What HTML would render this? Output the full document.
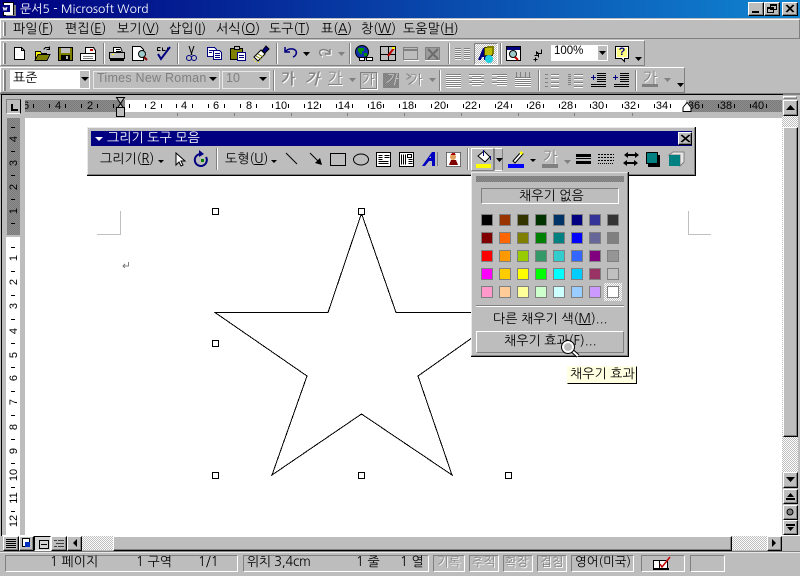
<!DOCTYPE html>
<html><head><meta charset="utf-8"><title>문서5 - Microsoft Word</title>
<style>
html,body{margin:0;padding:0;background:#bdbdbd}
#w{position:relative;width:800px;height:576px;overflow:hidden;background:#bdbdbd;font:13px "NanumGothic","Noto Sans CJK KR",sans-serif;color:#000}
#w div{position:absolute;box-sizing:border-box}
.t{white-space:nowrap;line-height:14px;height:14px}
.d{color:#848484;text-shadow:1px 1px 0 #fff}
.r{font:11px "Liberation Sans",sans-serif;line-height:12px;height:12px;text-align:center;width:20px;white-space:nowrap}
.v{font:11px "Liberation Sans",sans-serif;line-height:12px;height:12px;text-align:center;width:20px;white-space:nowrap;transform:rotate(-90deg)}
.bv{background:#bdbdbd;border:1px solid;border-color:#fff #000 #000 #fff;box-shadow:inset -1px -1px 0 #808080}
.tb{background:#bdbdbd;border:1px solid;border-color:#fff #808080 #808080 #fff}
.p{border:1px solid;border-color:#808080 #fff #fff #808080}
.dt{background:repeating-conic-gradient(#fff 0 25%,#bdbdbd 0 50%) 0 0/2px 2px}
.dk{background:repeating-conic-gradient(#7b7b7b 0 25%,#8c8c8c 0 50%) 0 0/2px 2px}
svg{position:absolute;left:0;top:0}
</style></head><body><div id="w">

<!-- title bar -->
<div style="left:0;top:0;width:800px;height:18px;background:linear-gradient(90deg,#000080,#1084d0)"></div>
<div class="t" style="left:20px;top:1px;color:#fff;font-size:12px;line-height:16px;height:16px">문서5 - Microsoft Word</div>
<div class="bv" style="left:748px;top:2px;width:16px;height:14px"></div>
<div class="bv" style="left:764px;top:2px;width:16px;height:14px"></div>
<div class="bv" style="left:782px;top:2px;width:16px;height:14px"></div>

<!-- menu bar -->
<div class="tb" style="left:0;top:19px;width:800px;height:20px"></div>
<div class="t" style="left:13px;top:22px">파일(<u>F</u>)</div>
<div class="t" style="left:65px;top:22px">편집(<u>E</u>)</div>
<div class="t" style="left:117px;top:22px">보기(<u>V</u>)</div>
<div class="t" style="left:169px;top:22px">삽입(<u>I</u>)</div>
<div class="t" style="left:216px;top:22px">서식(<u>O</u>)</div>
<div class="t" style="left:269px;top:22px">도구(<u>T</u>)</div>
<div class="t" style="left:321px;top:22px">표(<u>A</u>)</div>
<div class="t" style="left:361px;top:22px">창(<u>W</u>)</div>
<div class="t" style="left:403px;top:22px">도움말(<u>H</u>)</div>

<!-- toolbars -->
<div class="tb" style="left:0;top:40px;width:645px;height:26px"></div>
<div class="tb" style="left:0;top:67px;width:685px;height:26px"></div>
<div style="left:474px;top:43px;width:24px;height:22px;border:1px solid;border-color:#808080 #fff #fff #808080" class="dt"></div>
<div style="left:10px;top:70px;width:80px;height:19px;background:#fff"></div>
<div style="left:80px;top:71px;width:9px;height:17px;background:#bdbdbd"></div>
<div class="t" style="left:13px;top:71px">표준</div>
<div style="left:93px;top:71px;width:127px;height:18px;border:1px solid #e8e8e8"></div>
<div class="t d" style="left:97px;top:71px;font:12.5px/14px 'Liberation Sans',sans-serif;text-shadow:none;color:#808080;letter-spacing:.25px">Times New Roman</div>
<div style="left:222px;top:71px;width:48px;height:18px;border:1px solid #e8e8e8"></div>
<div class="t" style="left:226px;top:71px;font:12.5px/14px 'Liberation Sans',sans-serif;color:#808080">10</div>
<div class="t d" style="left:281px;top:73px;font-weight:bold;font-size:15px">가</div>
<div class="t d" style="left:305px;top:73px;font-style:italic;font-weight:bold;font-size:15px">가</div>
<div class="t d" style="left:328px;top:72px;font-size:15px"><u>가</u></div>
<div style="left:360px;top:72px;width:17px;height:17px;border:1px solid #808080;box-shadow:1px 1px 0 #fff"></div>
<div class="t d" style="left:362px;top:73px">가</div>
<div class="dk" style="left:383px;top:73px;width:16px;height:15px"></div>
<div class="t" style="left:385px;top:73px;color:#ccc;font-style:italic">가</div>
<div class="t d" style="left:410px;top:73px">가</div>
<div class="t d" style="left:643px;top:72px;font-size:15px">가</div>
<div style="left:551px;top:45px;width:57px;height:16px;background:#fff"></div>
<div style="left:598px;top:46px;width:9px;height:14px;background:#bdbdbd"></div>
<div class="t" style="left:554px;top:44px;font:11.5px/15px 'Liberation Sans',sans-serif">100%</div>

<!-- ruler zone -->
<div style="left:0;top:93px;width:800px;height:2px;background:#808080"></div>
<div style="left:1px;top:94px;width:782px;height:1px;background:#000"></div>
<div style="left:1px;top:94px;width:1px;height:442px;background:#000"></div>
<div style="left:25px;top:100px;width:100px;height:12px" class="dk"></div>
<div style="left:125px;top:100px;width:561px;height:12px;background:#fff"></div>
<div style="left:689px;top:100px;width:93px;height:12px" class="dk"></div>
<div class="p" style="left:6px;top:99px;width:15px;height:15px;border-color:#808080 #000 #fff #808080"></div>
<div style="left:25px;top:118px;width:758px;height:418px;background:#fff"></div>
<div class="dk" style="left:7px;top:118px;width:13px;height:117px"></div>
<div style="left:6px;top:237px;width:14px;height:298px;background:#fff"></div>

<!-- horizontal ruler numbers -->
<div class="r" style="left:16px;top:100px;clip-path:inset(0 0 0 9px)">6</div>
<div class="r" style="left:48px;top:100px">4</div>
<div class="r" style="left:80px;top:100px">2</div>
<div class="r" style="left:143px;top:100px">2</div>
<div class="r" style="left:174px;top:100px">4</div>
<div class="r" style="left:206px;top:100px">6</div>
<div class="r" style="left:239px;top:100px">8</div>
<div class="r" style="left:271px;top:100px">10</div>
<div class="r" style="left:303px;top:100px">12</div>
<div class="r" style="left:334px;top:100px">14</div>
<div class="r" style="left:366px;top:100px">16</div>
<div class="r" style="left:398px;top:100px">18</div>
<div class="r" style="left:430px;top:100px">20</div>
<div class="r" style="left:461px;top:100px">22</div>
<div class="r" style="left:493px;top:100px">24</div>
<div class="r" style="left:525px;top:100px">26</div>
<div class="r" style="left:557px;top:100px">28</div>
<div class="r" style="left:588px;top:100px">30</div>
<div class="r" style="left:620px;top:100px">32</div>
<div class="r" style="left:652px;top:100px">34</div>
<div class="r" style="left:684px;top:100px">36</div>
<div class="r" style="left:716px;top:100px">38</div>
<div class="r" style="left:748px;top:100px">40</div>

<!-- vertical ruler numbers -->
<div class="v" style="left:4px;top:133px">4</div>
<div class="v" style="left:4px;top:157px">3</div>
<div class="v" style="left:4px;top:181px">2</div>
<div class="v" style="left:4px;top:205px">1</div>
<div class="v" style="left:4px;top:252px">1</div>
<div class="v" style="left:4px;top:276px">2</div>
<div class="v" style="left:4px;top:300px">3</div>
<div class="v" style="left:4px;top:325px">4</div>
<div class="v" style="left:4px;top:349px">5</div>
<div class="v" style="left:4px;top:372px">6</div>
<div class="v" style="left:4px;top:396px">7</div>
<div class="v" style="left:4px;top:421px">8</div>
<div class="v" style="left:4px;top:445px">9</div>
<div class="v" style="left:4px;top:469px">10</div>
<div class="v" style="left:4px;top:492px">11</div>
<div class="v" style="left:4px;top:515px">12</div>

<!-- document art -->
<svg width="800" height="576">
<path shape-rendering="crispEdges" fill="none" stroke="#000" d="M361.500 213.500L396 312.500H508L418 376L452 475L361.500 414L272 475L307 376L215 312.500H328Z"/>
<g shape-rendering="crispEdges" fill="none" stroke="#c0c0c0">
<path d="M120.500 211V234.500H97M688.500 211V234.500H711"/>
</g>
<g shape-rendering="crispEdges" fill="#fff" stroke="#000">
<rect x="212.500" y="208.500" width="6" height="6"/><rect x="358.500" y="208.500" width="6" height="6"/>
<rect x="212.500" y="340.500" width="6" height="6"/>
<rect x="212.500" y="472.500" width="6" height="6"/><rect x="358.500" y="472.500" width="6" height="6"/><rect x="505.500" y="472.500" width="6" height="6"/>
</g>
<path d="M128.500 262v4h-5M125 264l-2 2 2 2" fill="none" stroke="#808080" shape-rendering="crispEdges"/>
<!-- ruler ticks -->
<path shape-rendering="crispEdges" fill="none" stroke="#000" d="M33.500 104v4M49.500 104v4M65.500 104v4M81.500 104v4M97.500 104v4M113.500 104v4M129.500 104v4M145.500 104v4M161.500 104v4M176.500 104v4M192.500 104v4M208.500 104v4M224.500 104v4M240.500 104v4M256.500 104v4M272.500 104v4M288.500 104v4M304.500 104v4M320.500 104v4M336.500 104v4M352.500 104v4M368.500 104v4M383.500 104v4M399.500 104v4M415.500 104v4M431.500 104v4M447.500 104v4M463.500 104v4M479.500 104v4M495.500 104v4M511.500 104v4M527.500 104v4M543.500 104v4M559.500 104v4M575.500 104v4M590.500 104v4M606.500 104v4M622.500 104v4M638.500 104v4M654.500 104v4M670.500 104v4M702.500 104v4M718.500 104v4M734.500 104v4M750.500 104v4M766.500 104v4
M11 127.500h4M11 151.500h4M11 175.500h4M11 199.500h4M11 223.500h4M11 247.500h4M11 271.500h4M11 295.500h4M11 319.500h4M11 343.500h4M11 367.500h4M11 391.500h4M11 415.500h4M11 439.500h4M11 463.500h4M11 487.500h4M11 511.500h4"/>
<path shape-rendering="crispEdges" fill="none" stroke="#808080" d="M177.500 113v3M234.500 113v3M291.500 113v3M347.500 113v3M404.500 113v3M461.500 113v3M518.500 113v3M574.500 113v3M632.500 113v3"/>
<path shape-rendering="crispEdges" fill="#000" d="M11 104h2v5h5v2h-7z"/>
<!-- ruler indents -->
<path fill="#bdbdbd" stroke="#000" d="M116.500 97.500h8l-4 6 4 6h-8l4-6z"/>
<rect x="116.500" y="107.500" width="8" height="9" fill="#bdbdbd" stroke="#000" shape-rendering="crispEdges"/>
<path fill="#fff" stroke="#000" d="M683 111.500v-4l4-5 4 5v4z"/>
</svg>

<!-- floating drawing toolbar -->
<div style="left:87px;top:127px;width:609px;height:49px;background:#000"></div>
<div style="left:87px;top:127px;width:608px;height:48px;background:#bdbdbd;border:1px solid;border-color:#e8e8e8 #808080 #808080 #e8e8e8;box-shadow:inset 1px 1px 0 #bdbdbd"></div>
<div style="left:91px;top:131px;width:601px;height:15px;background:#000080"></div>
<div class="t" style="left:107px;top:131px;color:#fff">그리기 도구 모음</div>
<div class="bv" style="left:678px;top:132px;width:14px;height:13px"></div>
<div class="t" style="left:100px;top:152px">그리기(<u>R</u>)</div>
<div class="t" style="left:225px;top:152px">도형(<u>U</u>)</div>
<div class="t d" style="left:543px;top:151px;font-size:15px">가</div>
<div style="left:471px;top:148px;width:23px;height:23px;border:1px solid;border-color:#fff #808080 #808080 #fff"></div>
<div style="left:494px;top:148px;width:9px;height:23px;border:1px solid;border-color:#fff #808080 #fff #808080"></div>

<!-- fill menu -->
<div style="left:471px;top:172px;width:158px;height:185px;background:#000"></div>
<div style="left:471px;top:172px;width:157px;height:184px;background:#bdbdbd;border:1px solid;border-color:#e8e8e8 #808080 #808080 #e8e8e8"></div>
<div class="dk" style="left:476px;top:176px;width:148px;height:6px"></div>
<div style="left:481px;top:188px;width:138px;height:16px;border:1px solid;border-color:#808080 #fff #fff #808080"></div>
<div class="t" style="left:519px;top:189px">채우기 없음</div>
<div style="left:476px;top:305px;width:148px;height:1px;background:#808080"></div>
<div style="left:476px;top:306px;width:148px;height:1px;background:#fff"></div>
<div class="t" style="left:493px;top:312px">다른 채우기 색(<u>M</u>)...</div>
<div style="left:476px;top:331px;width:148px;height:22px;border:1px solid;border-color:#fff #808080 #808080 #fff"></div>
<div class="t" style="left:504px;top:334px">채우기 효과(F)...</div>
<div class="dt" style="left:604px;top:283px;width:18px;height:18px"></div>

<!-- tooltip -->
<div style="left:567px;top:366px;width:70px;height:18px;background:#ffffe1;border:1px solid;border-color:#ffffe1 #000 #000 #ffffe1"></div>
<div class="t" style="left:570px;top:367px">채우기 효과</div>

<!-- scrollbars -->
<div style="left:782px;top:95px;width:18px;height:441px;background:#bdbdbd"></div>
<div class="tb" style="left:783px;top:96px;width:14px;height:3px"></div>
<div class="dt" style="left:782px;top:116px;width:16px;height:357px"></div>
<div class="bv" style="left:783px;top:127px;width:15px;height:310px"></div>
<div class="bv" style="left:783px;top:100px;width:15px;height:16px"></div>
<div class="bv" style="left:783px;top:472px;width:15px;height:16px"></div>
<div class="bv" style="left:783px;top:489px;width:15px;height:15px"></div>
<div class="bv" style="left:783px;top:505px;width:15px;height:15px"></div>
<div class="bv" style="left:783px;top:520px;width:15px;height:15px"></div>

<div style="left:2px;top:535px;width:798px;height:1px;background:#fff"></div>
<div class="dt" style="left:82px;top:536px;width:686px;height:14px"></div>
<div class="bv" style="left:113px;top:536px;width:619px;height:15px"></div>
<div class="bv" style="left:3px;top:536px;width:16px;height:15px"></div>
<div class="bv" style="left:19px;top:536px;width:15px;height:15px"></div>
<div style="left:34px;top:536px;width:17px;height:15px;border:1px solid;border-color:#000 #fff #fff #000;background:#d4d4d4"></div>
<div class="bv" style="left:51px;top:536px;width:16px;height:15px"></div>
<div class="bv" style="left:67px;top:536px;width:15px;height:15px"></div>
<div class="bv" style="left:767px;top:536px;width:15px;height:15px"></div>
<div style="left:0;top:551px;width:800px;height:1px;background:#808080"></div>
<div style="left:0;top:552px;width:800px;height:1px;background:#e8e8e8"></div>

<!-- status bar -->
<div class="p" style="left:5px;top:555px;width:233px;height:17px"></div>
<div class="p" style="left:243px;top:555px;width:186px;height:17px"></div>
<div class="p" style="left:433px;top:555px;width:32px;height:17px"></div>
<div class="p" style="left:469px;top:555px;width:30px;height:17px"></div>
<div class="p" style="left:503px;top:555px;width:30px;height:17px"></div>
<div class="p" style="left:537px;top:555px;width:30px;height:17px"></div>
<div class="p" style="left:571px;top:555px;width:63px;height:17px"></div>
<div class="p" style="left:641px;top:555px;width:44px;height:17px"></div>
<div class="p" style="left:690px;top:555px;width:35px;height:17px"></div>
<div class="t" style="left:50px;top:555px">1 페이지</div>
<div class="t" style="left:136px;top:555px">1 구역</div>
<div class="t" style="left:198px;top:555px">1/1</div>
<div class="t" style="left:247px;top:555px;letter-spacing:-.3px">위치 3,4cm</div>
<div class="t" style="left:356px;top:555px">1 줄</div>
<div class="t" style="left:400px;top:555px">1 열</div>
<div class="t d" style="left:437px;top:555px;font-size:12.5px">기록</div>
<div class="t d" style="left:472px;top:555px;font-size:12.5px">추적</div>
<div class="t d" style="left:505px;top:555px;font-size:12.5px">확장</div>
<div class="t d" style="left:540px;top:555px;font-size:12.5px">겹침</div>
<div class="t" style="left:575px;top:555px;font-size:12.5px">영어(미국)</div>

<!-- icons -->
<svg width="800" height="576" shape-rendering="crispEdges">
<!-- title icon -->
<path d="M3.500 2.500h10v13h-10z" fill="#fff" stroke="#000"/>
<path d="M1 5h9v7H1z" fill="#000080"/><path d="M3 7l1 3 1-2 1 2 1-3" fill="none" stroke="#fff" shape-rendering="auto"/>
<path d="M14 5h2v11H6v-1h8z" fill="#808080"/>
<!-- window buttons -->
<path d="M752 11h7v2h-7z"/>
<path d="M770.500 4.500h6v5h-6zM767.500 7.500h6v5h-6z" fill="#bdbdbd" stroke="#000"/><path d="M770 4h7v2h-7zM767 7h7v2h-7z"/>
<path d="M786 5l7 7M787 5l7 7M793 5l-7 7M794 5l-7 7" stroke="#000" fill="none" shape-rendering="auto"/>
<!-- grippers -->
<path d="M3 22h1v14H3zM3 43h1v21H3zM3 70h1v21H3z" fill="#fff"/><path d="M4 22h2v14H4zM4 43h2v21H4zM4 70h2v21H4z" fill="#808080"/>
<!-- toolbar separators -->
<path d="M103 43h1v21h-1zM177 43h1v21h-1zM276 43h1v21h-1zM349 43h1v21h-1zM448 43h1v21h-1zM500 43h1v21h-1zM273 70h1v21h-1zM439 70h1v21h-1zM538 70h1v21h-1zM635 70h1v21h-1zM216 148h1v22h-1zM467 148h1v22h-1z" fill="#808080"/>
<path d="M104 43h1v21h-1zM178 43h1v21h-1zM277 43h1v21h-1zM350 43h1v21h-1zM449 43h1v21h-1zM501 43h1v21h-1zM274 70h1v21h-1zM440 70h1v21h-1zM539 70h1v21h-1zM636 70h1v21h-1zM217 148h1v22h-1zM468 148h1v22h-1z" fill="#fff"/>

<!-- new -->
<path d="M14.500 47.500h7l3 3v9h-10z" fill="#fff" stroke="#000"/><path d="M21.500 47.500v3h3" fill="none" stroke="#000"/>
<!-- open -->
<path d="M35.500 51.500h5l1 2h5v7h-11z" fill="#ffff00" stroke="#000"/><path d="M38 54.500h12l-3 6H35z" fill="#808000" stroke="#000"/>
<path d="M43.500 49.500l2-2h3l1 1M49.500 46.500v3h-3" fill="none" stroke="#000"/>
<!-- save -->
<rect x="58.500" y="47.500" width="14" height="13" fill="#808000" stroke="#000"/>
<rect x="61" y="48" width="9" height="5" fill="#bdbdbd"/><rect x="61" y="55" width="9" height="5" fill="#000"/><rect x="66" y="56" width="2" height="3" fill="#bdbdbd"/>
<!-- web page -->
<path d="M85.500 47.500h8l2 3v3h-10z" fill="#fff" stroke="#000"/><path d="M90 49h3v2h-3z" fill="#c00000"/>
<rect x="80.500" y="53.500" width="15" height="7" fill="#fff" stroke="#000"/><g transform="translate(0,.5)"><path d="M83 56h10M83 58h10" stroke="#808080"/></g>
<!-- print -->
<path d="M113.500 47.500h7l2 5h-9z" fill="#fff" stroke="#000"/><rect x="109.500" y="52.500" width="15" height="6" fill="#bdbdbd" stroke="#000"/><path d="M110 59h14v2h-14z" fill="#000"/><path d="M112 54h2v1h-2z" fill="#ff0"/><g transform="translate(0,.5)"><path d="M116 49h4M116 51h5" stroke="#000"/></g>
<!-- preview -->
<path d="M132.500 46.500h8l3 3v11h-11z" fill="#fff" stroke="#000"/>
<circle cx="142" cy="54" r="3.500" fill="#9ecbcb" stroke="#000" shape-rendering="auto"/><path d="M144 57l3 3" stroke="#800000" stroke-width="2" shape-rendering="auto"/>
<!-- spell -->
<g transform="translate(.5,.5)"><path d="M157 47h3M157 47v3h3M162 47v3h3M167 47v3" fill="none" stroke="#000"/></g>
<path d="M158 54l3 5 9-12" fill="none" stroke="#000080" stroke-width="2" shape-rendering="auto"/>
<!-- cut -->
<path d="M189 46l3 9M194 46l-3 9" stroke="#000" fill="none" shape-rendering="auto"/><circle cx="189" cy="58" r="2.500" fill="none" stroke="#000080" shape-rendering="auto"/><circle cx="194" cy="58" r="2.500" fill="none" stroke="#000080" shape-rendering="auto"/>
<!-- copy -->
<path d="M207.500 47.500h7l2 2v7h-9z" fill="#fff" stroke="#000080"/><path d="M213.500 50.500h6l2 2v7h-8z" fill="#fff" stroke="#000080"/><g transform="translate(0,.5)"><path d="M209 50h4M209 52h3M215 53h5M215 55h5M215 57h5" stroke="#000080"/></g>
<!-- paste -->
<path d="M230.500 48.500h12v11h-12z" fill="#808000" stroke="#000"/><path d="M234.500 46.500h5v3h-5z" fill="#bdbdbd" stroke="#000"/><path d="M237.500 52.500h8v8h-8z" fill="#fff" stroke="#000080"/><g transform="translate(0,.5)"><path d="M239 55h5M239 57h5" stroke="#000080"/></g>
<!-- painter -->
<g shape-rendering="auto"><path d="M254 57l7-7 4 4-7 7z" fill="#fff" stroke="#000"/><path d="M256 56l5 3M258 54l5 3" stroke="#808000"/><path d="M262 51l4-5 3 3-4 4z" fill="#000080" stroke="#000"/></g><path d="M253 59h1v1h-1zM255 61h1v1h-1zM258 62h1v1h-1z" fill="#ff0"/>
<!-- undo / redo -->
<path d="M285 47v5h5M285 52c3-4 9-4 11-1 1 2 0 5-3 6" fill="none" stroke="#000080" stroke-width="1.500" shape-rendering="auto"/>
<path d="M331 50v5h-5M331 54c-3-4-8-4-10-2-1 2 0 4 2 5" fill="none" stroke="#fff" stroke-width="1.500" shape-rendering="auto"/>
<path d="M330 49v5h-5M330 53c-3-4-8-4-10-2-1 2 0 4 2 5" fill="none" stroke="#808080" stroke-width="1.500" shape-rendering="auto"/>
<!-- dropdown arrows -->
<g shape-rendering="auto"><path d="M303 52h7l-3.500 4z" fill="#000"/><path d="M338 52h7l-3.500 4z" fill="#808080"/>
<path d="M635 57h7l-3.500 4z" fill="#000"/><path d="M81 77h8l-4 4z" fill="#000"/><path d="M209 77h8l-4 4z" fill="#000"/><path d="M259 77h8l-4 4z" fill="#000"/><path d="M349 78h7l-3.500 4z" fill="#808080"/><path d="M429 78h7l-3.500 4z" fill="#808080"/><path d="M664 78h7l-3.500 4z" fill="#808080"/><path d="M677 83h7l-3.500 4z" fill="#000"/><path d="M599 51h7l-3.500 4z" fill="#000"/></g>
<!-- globe -->
<circle cx="362" cy="52" r="6.500" fill="#1030b0" stroke="#000" shape-rendering="auto"/><path d="M358 48h6v3h-2v3h-2l-2-3zM364 53h3v3h-3z" fill="#009000"/>
<path d="M359.500 57.500h5v3h-5zM366.500 57.500h6v3h-6z" fill="#fff" stroke="#000"/>
<!-- tables -->
<rect x="380.500" y="46.500" width="15" height="14" fill="#bdbdbd" stroke="#000"/><path d="M388 47h1v13h-1zM381 54h14v1h-14z" fill="#000"/><path d="M388 56l6-8" stroke="#c00000" stroke-width="2" shape-rendering="auto"/><path d="M392 47h3v2h-3z" fill="#ff0"/>
<!-- disabled window/excel -->
<rect x="403.500" y="47.500" width="14" height="12" fill="none" stroke="#808080"/><path d="M404 49h14v2h-14z" fill="#808080"/><path d="M404 60h15v1h-15z" fill="#fff"/>
<rect x="425.500" y="47.500" width="14" height="12" fill="#9c9c9c" stroke="#808080"/><path d="M428 49l10 10M438 49l-10 10" stroke="#6c6c6c" stroke-width="2" shape-rendering="auto"/><path d="M425 60h15v1h-15z" fill="#fff"/>
<!-- columns -->
<g transform="translate(0,.5)"><path d="M455 48h6M464 48h6M455 50h6M464 50h6M455 52h6M464 52h6M455 54h6M464 54h6M455 56h6M464 56h6M455 58h6M464 58h6" stroke="#808080"/><path d="M455 49h6M464 49h6M455 51h6M464 51h6M455 53h6M464 53h6M455 55h6M464 55h6M455 57h6M464 57h6M455 59h6M464 59h6" stroke="#efefef"/></g>
<!-- drawing pressed -->
<path d="M478 60l5-12h3v12h-2v-3h-2l-1 3z" fill="#000080"/><rect x="484.500" y="47.500" width="8" height="8" fill="#bdbd00" stroke="#404000"/><path d="M487 46h7v2h-7zM492 47h2v7h-2z" fill="#808000"/><circle cx="489" cy="59" r="4" fill="#20d0e0" shape-rendering="auto"/>
<!-- doc map -->
<rect x="506.500" y="46.500" width="14" height="14" fill="#fff" stroke="#000"/><rect x="507" y="47" width="13" height="3" fill="#000080"/><circle cx="513" cy="54" r="3.500" fill="#9ecbcb" stroke="#000" shape-rendering="auto"/><path d="M515 57l3 3" stroke="#c00000" stroke-width="2" shape-rendering="auto"/>
<!-- pilcrow arrows -->
<g transform="translate(.5,.5)"><path d="M541 49v4h-3v4M538 55h-4M535 57v4M533 59h4" fill="none" stroke="#000"/></g><path d="M536 51l3 2-3 2z" fill="#000"/>
<!-- help -->
<path d="M615.500 46.500h13v12h-4v3l-3-3h-6z" fill="#fff" stroke="#000"/><rect x="617" y="48" width="10" height="9" fill="#ffff80"/>
<!-- toolbar 2 align -->
<g transform="translate(0,.5)" fill="none">
<g stroke="#808080">
<path d="M446 74h15M446 76h15M446 78h15M446 80h15M446 82h15M446 84h15M446 86h15"/>
<path d="M469 74h15M472 76h9M469 78h15M472 80h9M469 82h15M472 84h9"/>
<path d="M492 74h15M497 76h10M492 78h15M497 80h10M492 82h15M497 84h10"/>
<path d="M515 77h16M515 79h16M515 81h16M515 83h16M515 85h16"/>
<path d="M551 74h8M551 78h8M551 82h8M551 86h8"/><path d="M574 74h9M574 78h9M574 82h9M574 86h9"/>
<path d="M545 74h3M545 78h3M545 82h3M545 86h3M568 74h3M568 76h3M568 78h3M568 80h3M568 82h3M568 84h3"/>
</g>
<g stroke="#fff">
<path d="M446 75h15M446 77h15M446 79h15M446 81h15M446 83h15M446 85h15M446 87h15"/>
<path d="M469 75h15M472 77h9M469 79h15M472 81h9M469 83h15M472 85h9"/>
<path d="M492 75h15M497 77h10M492 79h15M497 81h10M492 83h15M497 85h10"/>
<path d="M515 78h16M515 80h16M515 82h16M515 84h16M515 86h16"/>
<path d="M551 75h8M551 79h8M551 83h8M551 87h8M574 75h9M574 79h9M574 83h9M574 87h9"/>
</g>
</g>
<path d="M516 72h1v5h-1zM520 72h1v5h-1zM525 72h1v5h-1zM529 72h1v5h-1z" fill="#808080"/>
<!-- indents -->
<g transform="translate(0,.5)"><path d="M597 73h9M597 75h9M597 77h9M597 79h9M597 81h9M591 84h15M591 86h15M620 73h9M620 75h9M620 77h9M620 79h9M620 81h9M614 84h15M614 86h15" stroke="#000"/>
<path d="M591 77h5M613 77h5" stroke="#000080"/></g><path d="M593 75h1v5h-1zM615 75h1v5h-1z" fill="#000080"/>
<!-- font color bar disabled -->
<path d="M642 84h16v3h-16z" fill="#808080"/>
<!-- char scale -->
<g transform="translate(.5,.5)"><path d="M406 73l4 3-4 3M408 84l4-3" stroke="#808080" fill="none"/></g>

<!-- floating toolbar title arrow and close -->
<path d="M95 137h8l-4 4z" fill="#fff" shape-rendering="auto"/>
<path d="M681 135l8 7M682 135l8 7M689 135l-8 7M690 135l-8 7" stroke="#000" fill="none" shape-rendering="auto"/>
<!-- dropdowns in float bar -->
<g shape-rendering="auto"><path d="M158 160h6l-3 3zM271 160h6l-3 3zM496 158h7l-3.500 4zM530 159h6l-3 3z" fill="#000"/>
<path d="M564 160h7l-3.500 4z" fill="#808080"/>
<!-- pointer -->
<path d="M176 153v12l3-3 2 4 2-1-2-4h4z" fill="#fff" stroke="#000"/>
<!-- rotate -->
<path d="M201 154a6 6 0 1 0 5 3" fill="none" stroke="#000080" stroke-width="2"/><path d="M199 150l5 4-5 3z" fill="#000080"/>
<!-- line, arrow -->
<path d="M286 153l11 11" stroke="#000"/>
<path d="M310 153l10 10" stroke="#000"/><path d="M322 165l-7-2 5-5z" fill="#000"/>
<ellipse cx="361" cy="159.500" rx="7.500" ry="5.500" fill="none" stroke="#000"/></g>
<rect x="201" y="159" width="3" height="3" fill="#008000"/>
<rect x="330.500" y="153.500" width="15" height="12" fill="none" stroke="#000"/>
<!-- text boxes -->
<rect x="376.500" y="152.500" width="14" height="14" fill="#fff" stroke="#000"/><g transform="translate(.5,.5)"><path d="M378 155h4M384 155h5M378 157h4M384 157h5M378 159h4M378 161h10M378 163h10" stroke="#000"/></g>
<rect x="399.500" y="152.500" width="14" height="14" fill="#fff" stroke="#000"/><g transform="translate(.5,.5)"><path d="M401 154v10M403 154v10M405 154v10M407 154h4v3h-4zM408 159h4M408 161h4M408 163h4" stroke="#000" fill="none"/></g>
<!-- wordart -->
<g shape-rendering="auto"><path d="M422 166l10-14h3v14h-3v-5h-3l-4 5z" fill="#0000c0"/><path d="M431 158v-2l-2 2z" fill="#bdbdbd"/></g><path d="M437 152h1v14h-1z" fill="#808080"/>
<!-- clipart -->
<rect x="446.500" y="152.500" width="14" height="14" fill="#fff" stroke="#000" stroke-dasharray="1 1"/><circle cx="453" cy="157" r="3" fill="#e0a060" shape-rendering="auto"/><path d="M449 156l3-3h3l1 3-1-1h-5z" fill="#b00000"/><path d="M449 165l2-5h5l2 5z" fill="#800000"/>
<!-- fill bucket -->
<path d="M478 156l6-5 6 6-5 5z" fill="#fff" stroke="#000" shape-rendering="auto"/><path d="M483 150h1v6h-1zM490 156h1v4h-1z" fill="#000080"/>
<rect x="476" y="164" width="15" height="4" fill="#ffff00"/>
<!-- pen colour -->
<path d="M513 161l8-9 2 2-8 9z" fill="#fff" stroke="#000" shape-rendering="auto"/><path d="M519 153l2-2 2 2-1 2z" fill="#ff0"/>
<rect x="508" y="164" width="16" height="4" fill="#0000ff"/>
<!-- font colour bar -->
<rect x="542" y="164" width="16" height="4" fill="#808080"/>
<!-- line style -->
<path d="M576 154h15v3h-15zM576 161h15v3h-15zM576 158h15v1h-15z" fill="#000"/>
<g transform="translate(0,.5)"><path d="M598 154h16M598 157h16M598 160h16" stroke="#000" stroke-dasharray="2 1"/><path d="M598 163h16" stroke="#000" stroke-dasharray="1 1"/></g>
<!-- arrows style -->
<path d="M626 154h12v2h-12zM625 162h11v2h-11z" fill="#000"/><path d="M624 155l4-3v6zM639 155l-4-3v6zM623 163l4-3v6zM638 163l-4-3v6z" fill="#000" shape-rendering="auto"/>
<!-- shadow -->
<rect x="648" y="155" width="12" height="12" fill="#000"/><rect x="646.500" y="152.500" width="11" height="11" fill="#008080" stroke="#000"/>
<!-- 3D -->
<path d="M669 155l4-3h11v10l-4 4v-11z" fill="#e8e8e8" stroke="#808080" shape-rendering="auto"/><rect x="669" y="155" width="11" height="11" fill="#008080"/>

<!-- swatches -->
<g stroke="#808080">
<rect x="481.500" y="214.500" width="11" height="11" fill="#000"/><rect x="499.500" y="214.500" width="11" height="11" fill="#993300"/><rect x="517.500" y="214.500" width="11" height="11" fill="#333300"/><rect x="535.500" y="214.500" width="11" height="11" fill="#003300"/><rect x="553.500" y="214.500" width="11" height="11" fill="#003366"/><rect x="571.500" y="214.500" width="11" height="11" fill="#000080"/><rect x="589.500" y="214.500" width="11" height="11" fill="#333399"/><rect x="607.500" y="214.500" width="11" height="11" fill="#333333"/>
<rect x="481.500" y="232.500" width="11" height="11" fill="#800000"/><rect x="499.500" y="232.500" width="11" height="11" fill="#ff6600"/><rect x="517.500" y="232.500" width="11" height="11" fill="#808000"/><rect x="535.500" y="232.500" width="11" height="11" fill="#008000"/><rect x="553.500" y="232.500" width="11" height="11" fill="#008080"/><rect x="571.500" y="232.500" width="11" height="11" fill="#0000ff"/><rect x="589.500" y="232.500" width="11" height="11" fill="#666699"/><rect x="607.500" y="232.500" width="11" height="11" fill="#808080"/>
<rect x="481.500" y="250.500" width="11" height="11" fill="#ff0000"/><rect x="499.500" y="250.500" width="11" height="11" fill="#ff9900"/><rect x="517.500" y="250.500" width="11" height="11" fill="#99cc00"/><rect x="535.500" y="250.500" width="11" height="11" fill="#339966"/><rect x="553.500" y="250.500" width="11" height="11" fill="#33cccc"/><rect x="571.500" y="250.500" width="11" height="11" fill="#3366ff"/><rect x="589.500" y="250.500" width="11" height="11" fill="#800080"/><rect x="607.500" y="250.500" width="11" height="11" fill="#969696"/>
<rect x="481.500" y="268.500" width="11" height="11" fill="#ff00ff"/><rect x="499.500" y="268.500" width="11" height="11" fill="#ffcc00"/><rect x="517.500" y="268.500" width="11" height="11" fill="#ffff00"/><rect x="535.500" y="268.500" width="11" height="11" fill="#00ff00"/><rect x="553.500" y="268.500" width="11" height="11" fill="#00ffff"/><rect x="571.500" y="268.500" width="11" height="11" fill="#00ccff"/><rect x="589.500" y="268.500" width="11" height="11" fill="#993366"/><rect x="607.500" y="268.500" width="11" height="11" fill="#c0c0c0"/>
<rect x="481.500" y="286.500" width="11" height="11" fill="#ff99cc"/><rect x="499.500" y="286.500" width="11" height="11" fill="#ffcc99"/><rect x="517.500" y="286.500" width="11" height="11" fill="#ffff99"/><rect x="535.500" y="286.500" width="11" height="11" fill="#ccffcc"/><rect x="553.500" y="286.500" width="11" height="11" fill="#ccffff"/><rect x="571.500" y="286.500" width="11" height="11" fill="#99ccff"/><rect x="589.500" y="286.500" width="11" height="11" fill="#cc99ff"/><rect x="607.500" y="286.500" width="11" height="11" fill="#ffffff"/>
</g>
<!-- magnifier cursor -->
<g shape-rendering="auto"><path d="M569 348l9 8" stroke="#000" stroke-width="4"/><path d="M569 348l9 8" stroke="#fff" stroke-width="2"/>
<circle cx="568" cy="347" r="5" fill="#bdbdbd" stroke="#fff" stroke-width="2"/><circle cx="568" cy="347" r="6.500" fill="none" stroke="#000"/>

<!-- scroll arrows -->
<path d="M786 110l4.500-5 4.500 5z" fill="#000"/>
<path d="M786 477h9l-4.500 5z" fill="#000"/>
<path d="M787 497l3.500-4 3.500 4zM786 498h9v2h-9z" fill="#000"/>
<circle cx="790" cy="512" r="3" fill="#808080" stroke="#000"/>
<path d="M786 524h9v2h-9zM787 527h7l-3.500 4z" fill="#000"/>
<path d="M77 539v8l-4-4zM772 539v8l4-4z" fill="#000"/></g>
<!-- view buttons -->
<path d="M6 539h10v1H6zM6 541h10v1H6zM6 543h10v1H6zM6 545h10v1H6zM6 547h10v1H6z" fill="#000"/>
<rect x="22.500" y="538.500" width="7" height="8" fill="#fff" stroke="#000"/><rect x="25" y="542" width="5" height="5" fill="#0030c0"/>
<rect x="39.500" y="540.500" width="9" height="8" fill="none" stroke="#000"/><path d="M41 544h6v1h-6z" fill="#000"/>
<path d="M54 540h3v1h-3zM58 540h6v1h-6zM56 543h8v1h-8zM54 546h3v1h-3zM58 546h6v1h-6z" fill="#404040"/>
<!-- status book -->
<path d="M653.500 560.500h12l2 1v7h-14z" fill="#fff" stroke="#000"/><path d="M653 568h16v2h-16z" fill="#000"/><path d="M659 561h1v7h-1z" fill="#000"/>
<path d="M660 564l2 3 8-10" fill="none" stroke="#c00000" stroke-width="1.500" shape-rendering="auto"/>
</svg>
<div class="t" style="left:617px;top:46px;width:10px;text-align:center;font:bold 11px/12px 'Liberation Sans',sans-serif;color:#000080;height:12px">?</div>
</div></body></html>
